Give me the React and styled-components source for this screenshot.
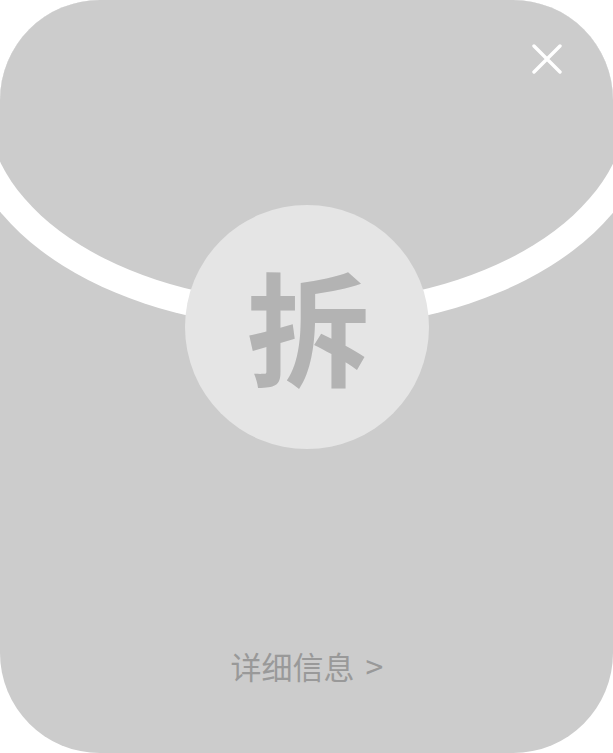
import React from 'react'
import styled, { createGlobalStyle } from 'styled-components'

const GlobalStyle = createGlobalStyle`
  html, body {
    margin: 0;
    padding: 0;
    background: #ffffff;
  }
  body {
    font-family: 'Noto Sans CJK SC', 'Noto Sans', sans-serif;
  }
`

const Envelope = styled.div`
  position: relative;
  width: 613px;
  height: 753px;
  border-radius: 100px;
  background: #cccccc;
  overflow: hidden;
  display: flex;
  flex-direction: column;
  align-items: center;
`

// white band under the flap: an outer ellipse with the grey flap inside it
const FlapBand = styled.div`
  flex-shrink: 0;
  box-sizing: border-box;
  width: 690px;
  height: 329px;
  padding-bottom: 26px;
  background: #ffffff;
  border-radius: 0 0 345px 345px / 0 0 216px 216px;
  display: flex;
  justify-content: center;
`

const FlapFace = styled.div`
  flex-shrink: 0;
  width: 640px;
  height: 303px;
  background: #cccccc;
  border-radius: 0 0 320px 320px / 0 0 197px 197px;
`

const OpenButton = styled.button`
  position: relative;
  z-index: 1;
  flex-shrink: 0;
  box-sizing: border-box;
  width: 244px;
  height: 244px;
  margin-top: -124px;
  margin-left: 1px;
  padding: 0 0 8px 2px;
  border: none;
  border-radius: 50%;
  background: #e5e5e5;
  color: #b3b3b3;
  font-family: 'Noto Sans CJK SC', sans-serif;
  font-size: 123px;
  font-weight: 700;
  line-height: 1;
  display: flex;
  align-items: center;
  justify-content: center;
  cursor: pointer;
`

const Details = styled.div`
  margin-top: auto;
  margin-bottom: 72px;
  margin-left: 1px;
  color: #999999;
  font-size: 31px;
  line-height: 31px;
  display: flex;
  align-items: center;
`

const Arrow = styled.span`
  margin-left: 11px;
  font-size: 32px;
`

const CloseButton = styled.button`
  position: absolute;
  top: 44px;
  right: 51px;
  width: 30px;
  height: 30px;
  padding: 0;
  border: none;
  background: transparent;
  cursor: pointer;
  svg {
    display: block;
  }
`

const App = () => {
  return (
    <>
      <GlobalStyle />
      <Envelope>
        <FlapBand>
          <FlapFace />
        </FlapBand>
        <OpenButton>拆</OpenButton>
        <Details>
          详细信息<Arrow>&gt;</Arrow>
        </Details>
        <CloseButton aria-label="关闭">
          <svg width="30" height="30" viewBox="0 0 30 30">
            <path d="M2 2 L28 28 M28 2 L2 28" stroke="#ffffff" strokeWidth="3.4" strokeLinecap="round" />
          </svg>
        </CloseButton>
      </Envelope>
    </>
  )
}

export default App
